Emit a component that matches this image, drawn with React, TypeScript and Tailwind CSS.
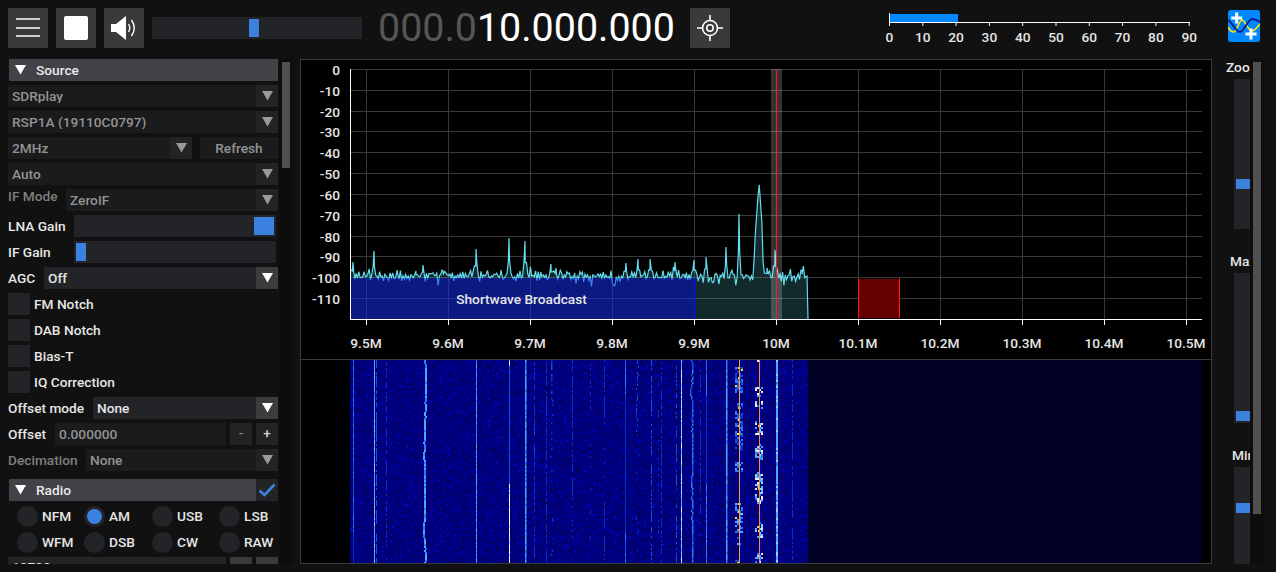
import React, { useMemo } from "react";

function mulberry(seed: number) {
  return () => {
    seed |= 0; seed = (seed + 0x6d2b79f5) | 0;
    let t = Math.imul(seed ^ (seed >>> 15), 1 | seed);
    t = (t + Math.imul(t ^ (t >>> 7), 61 | t)) ^ t;
    return ((t ^ (t >>> 14)) >>> 0) / 4294967296;
  };
}

const Tri = ({ color = "#fff" }: { color?: string }) => (
  <svg width="11" height="10" viewBox="0 0 11 10" className="shrink-0"><polygon points="0,0 11,0 5.5,9.5" fill={color} /></svg>
);

const Combo = ({ text, disabled, className = "" }: { text: string; disabled?: boolean; className?: string }) => (
  <div className={`flex h-[22px] items-center ${disabled ? "bg-[#1a1b1d] text-[#939393]" : "bg-[#222427] text-[#e6e6e6]"} ${className}`}>
    <span className="flex-1 truncate pl-1 pt-px">{text}</span>
    <span className={`flex h-[22px] w-[22px] shrink-0 items-center justify-center ${disabled ? "bg-[#222325]" : "bg-[#3c3c3c]"}`}>
      <Tri color={disabled ? "#9a9a9a" : "#ffffff"} />
    </span>
  </div>
);

const Header = ({ text, check }: { text: string; check?: boolean }) => (
  <div className="ml-px flex h-[22px] items-center">
    <div className="flex h-[22px] flex-1 items-center bg-[#424248] pl-[6px] text-[#e8e8e8]">
      <Tri />
      <span className="ml-[10px] pt-px">{text}</span>
    </div>
    {check && (
      <span className="flex h-[22px] w-[22px] items-center justify-center bg-[#222427]">
        <svg width="18" height="14" viewBox="0 0 18 14"><path d="M1.5 7.5 L6.5 12 L16.5 1.5" fill="none" stroke="#3b82e0" strokeWidth="2.6" /></svg>
      </span>
    )}
  </div>
);

const Check = ({ text }: { text: string }) => (
  <div className="flex h-[22px] items-center gap-1 text-[#e6e6e6]">
    <span className="h-[22px] w-[22px] bg-[#222427]" />
    <span className="pt-px">{text}</span>
  </div>
);

const Slider = ({ thumbClass, className = "" }: { thumbClass: string; className?: string }) => (
  <div className={`flex h-[22px] items-center bg-[#222427] px-[2px] ${className}`}>
    <span className={`h-[18px] bg-[#3b82e0] ${thumbClass}`} />
  </div>
);

const Radio = ({ text, on, w }: { text: string; on?: boolean; w: string }) => (
  <div className={`flex h-[22px] items-center gap-[4px] text-[#e6e6e6] ${w}`}>
    <span className="flex h-[21px] w-[21px] items-center justify-center rounded-full bg-[#222427]">
      {on && <span className="h-[15px] w-[15px] rounded-full bg-[#3b82e0]" />}
    </span>
    <span className="pt-px">{text}</span>
  </div>
);

const Btn = ({ children }: { children: React.ReactNode }) => (
  <div className="flex h-10 w-10 shrink-0 items-center justify-center bg-[#3a3a3a]">{children}</div>
);

function Meter() {
  const ticks = Array.from({ length: 10 }, (_, i) => i);
  return (
    <svg width="320" height="50" viewBox="880 0 320 50" className="block">
      <rect x="890" y="14" width="68" height="8" fill="#0088ff" />
      <line x1="889.5" y1="13" x2="889.5" y2="26" stroke="#fff" />
      <line x1="889" y1="22.5" x2="1190" y2="22.5" stroke="#fff" />
      {ticks.map((i) => {
        const x = 889.5 + i * 33.3;
        return (
          <g key={i}>
            <line x1={x} y1="22" x2={x} y2="26" stroke="#fff" />
            <text x={x} y="42" textAnchor="middle" fontSize="13.7" fontWeight="500" fill="#e6e6e6">{i * 10}</text>
          </g>
        );
      })}
    </svg>
  );
}

function Logo() {
  return (
    <svg width="32" height="32" viewBox="0 0 32 32" className="block">
      <rect width="32" height="32" rx="2.5" fill="#0088ff" />
      <path d="M0 17 C2 21 4 22 6 22 C9 22 11 10 14 10 C17 10 20 21 24 21 C27 21 30 16 32 14" fill="none" stroke="#ffe600" strokeWidth="1.7" />
      <path d="M0 10 C4 12 8 22 12 22 C16 22 20 9 24 9 C27 9 30 11 32 12" fill="none" stroke="#0a1f8f" strokeWidth="1.9" />
      <path d="M8.7 2.5 V13.5 M3.2 8 H14.2" stroke="#fff" strokeWidth="3" />
      <path d="M23 18.5 V29.5 M17.5 24 H28.5" stroke="#fff" strokeWidth="3" />
    </svg>
  );
}

const grid = "#383838";
const xTicks = ["9.5M", "9.6M", "9.7M", "9.8M", "9.9M", "10M", "10.1M", "10.2M", "10.3M", "10.4M", "10.5M"];

const peaks: [number, number][] = [
  [353, 262], [374, 251], [423, 265], [476, 249], [509, 238], [525, 241], [551, 264], [556, 268], [501, 270], [397, 270], [416, 271], [443, 271],
  [626, 263], [638, 259], [650, 259], [675, 262], [694, 260], [706, 257], [726, 247], [739, 214], [775, 250], [767, 268], [802, 270],
];

function Spectrum() {
  const { line, fill } = useMemo(() => {
    const r = mulberry(7);
    const pts: [number, number][] = [];
    let flip = 1;
    for (let x = 351; x < 807; x += 1.3) {
      flip = -flip;
      const g = (r() + r() - 1) * 5 + flip * 1.6;
      let y = 276 + g;
      if (r() < 0.06) y += 4 + r() * 6;
      if (r() < 0.12) y -= 2 + r() * 4;
      for (const [px, py] of peaks) {
        const d = Math.abs(x - px);
        if (d < 1.6) y = Math.min(y, py + (277 - py) * 0.6);
      }
      if (x > 753.5 && x < 764) {
        const e = 245 - Math.max(0, 4.5 - Math.abs(x - 759)) * 14;
        y = Math.min(y, x < 755 || x > 763 ? 262 : e);
      }
      pts.push([x, y]);
    }
    for (const [px, py] of peaks) pts.push([px, py]);
    pts.sort((a, b) => a[0] - b[0]);
    pts.push([807, 276], [808, 319]);
    const l = pts.map((p) => `${p[0].toFixed(1)},${p[1].toFixed(1)}`).join(" ");
    return { line: l, fill: `351,319 ${l}` };
  }, []);
  return (
    <svg width="910" height="299" viewBox="301 60 910 299" className="block shrink-0">
      {xTicks.map((_, i) => {
        const x = 366.5 + i * 82;
        return <line key={i} x1={x} y1="69" x2={x} y2="319" stroke={grid} />;
      })}
      {Array.from({ length: 12 }, (_, i) => {
        const y = Math.round(69 + i * 20.83) + 0.5;
        return (
          <g key={i}>
            <line x1="350" y1={y} x2="1202" y2={y} stroke={grid} />
            <text x="340" y={y + 5} textAnchor="end" fontSize="13.7" fontWeight="500" fill="#e6e6e6">{i === 0 ? "0" : `-${i * 10}`}</text>
          </g>
        );
      })}
      <polygon points={fill} fill="#5fd0e0" fillOpacity="0.2" />
      <polyline points={line} fill="none" stroke="#62dcee" strokeWidth="1.2" />
      <rect x="351" y="278" width="344" height="41" fill="#0000ff" fillOpacity="0.4" />
      <line x1="695" y1="278" x2="695" y2="319" stroke="#0000ff" />
      <rect x="771" y="69" width="11" height="250" fill="#ffffff" fillOpacity="0.2" />
      <line x1="776.5" y1="69" x2="776.5" y2="319" stroke="#ff1a1a" />
      <rect x="858" y="279" width="41" height="39" fill="#640000" />
      <line x1="858.5" y1="278" x2="858.5" y2="318" stroke="#ff1a1a" />
      <line x1="899.5" y1="278" x2="899.5" y2="318" stroke="#ff1a1a" />
      <line x1="350.5" y1="69" x2="350.5" y2="320" stroke="#fff" />
      <line x1="350" y1="319.5" x2="1202" y2="319.5" stroke="#fff" />
      {xTicks.map((t, i) => {
        const x = 366.5 + i * 82;
        return (
          <g key={t}>
            <line x1={x} y1="319" x2={x} y2="325" stroke="#fff" />
            <text x={x - 0.5} y="348" textAnchor="middle" fontSize="13.7" fontWeight="500" fill="#e6e6e6">{t}</text>
          </g>
        );
      })}
      <text x="521.5" y="304" textAnchor="middle" fontSize="13.7" fontWeight="500" fill="#e6e6e6">Shortwave Broadcast</text>
    </svg>
  );
}

type Sig = { x: number; w: number; v: number; on: number; wander?: number };
const sigs: Sig[] = [
  { x: 353, w: 1, v: 0.45, on: 0.4 }, { x: 374, w: 1, v: 0.72, on: 0.95 }, { x: 376, w: 1, v: 0.42, on: 0.5 }, { x: 386, w: 1, v: 0.28, on: 0.2 },
  { x: 424, w: 2, v: 0.66, on: 0.95, wander: 1.2 }, { x: 476, w: 1, v: 0.62, on: 0.95 }, { x: 509, w: 1, v: 0.98, on: 0.85 },
  { x: 525, w: 1.5, v: 0.66, on: 0.98 }, { x: 534, w: 1, v: 0.32, on: 0.35 }, { x: 551, w: 1.5, v: 0.34, on: 0.6, wander: 1 }, { x: 546, w: 1, v: 0.25, on: 0.3 },
  { x: 572, w: 1, v: 0.26, on: 0.4 }, { x: 590, w: 1, v: 0.25, on: 0.3 }, { x: 604, w: 1, v: 0.28, on: 0.35 },
  { x: 625, w: 1, v: 0.5, on: 0.9 }, { x: 637, w: 1, v: 0.4, on: 0.55, wander: 0.6 }, { x: 651, w: 1, v: 0.4, on: 0.7 }, { x: 658, w: 1, v: 0.32, on: 0.5 }, { x: 661, w: 1, v: 0.28, on: 0.4 },
  { x: 676, w: 1, v: 0.38, on: 0.55 }, { x: 681, w: 1, v: 0.84, on: 0.95 }, { x: 691, w: 1.5, v: 0.5, on: 0.8, wander: 1.4 }, { x: 700, w: 1, v: 0.28, on: 0.4 },
  { x: 706, w: 1, v: 0.55, on: 0.75 }, { x: 726, w: 1.5, v: 0.66, on: 0.98 }, { x: 776, w: 2, v: 0.72, on: 0.98 }, { x: 792, w: 1, v: 0.28, on: 0.15 },
];
const blotches: [number, number, number, number, number][] = [
  [755, 763, 387, 397, 0.95], [755, 763, 401, 410, 0.95], [755, 763, 421, 435, 0.95], [755, 763, 444, 462, 0.85], [755, 763, 472, 505, 0.9], [755, 763, 522, 538, 0.9], [755, 763, 553, 563, 0.9], [755, 763, 360, 362, 0.9],
  [735, 743, 367, 392, 0.5], [735, 743, 403, 450, 0.55], [735, 743, 462, 472, 0.7], [735, 743, 503, 532, 0.7], [737, 741, 537, 547, 0.7], [735, 743, 560, 563, 0.6],
];

function sigColor(v: number) {
  if (v >= 0.95) return "#ffffff";
  if (v > 0.85) return "#dff1ff";
  if (v > 0.72) return "#8fd0ff";
  if (v > 0.58) return "#4aa8ff";
  if (v > 0.46) return "#2a7cf0";
  if (v > 0.34) return "#1650dc";
  return "#0a2ec0";
}

function Waterfall() {
  const layers = useMemo(() => {
    const r = mulberry(42);
    const m = new Map<string, string[]>();
    const add = (c: string, x: number, y: number, w: number, h: number) => {
      if (!m.has(c)) m.set(c, []);
      m.get(c)!.push(`M${x} ${y}h${w}v${h}h${-w}z`);
    };
    const noise = ["#000060", "#00006e", "#00007c", "#00008a", "#00009a", "#0008ac"];
    for (let y = 360; y < 563; y += 2) {
      for (let x = 350; x < 808; x += 2) {
        const n = r() + r();
        let idx = Math.floor(n * 2.6);
        if (r() < 0.012) idx = 5;
        add(noise[Math.min(idx, 5)], x, y, 2, 2);
      }
    }
    for (const s of sigs) {
      let on = true; let off = 0; let drift = 0;
      for (let y = 360; y < 563; y += 2) {
        if (r() < 0.02) on = r() < s.on;
        if (s.wander) { drift += (r() - 0.5) * 0.9; drift = Math.max(-s.wander, Math.min(s.wander, drift)); }
        off = Math.round(drift);
        if (s.v < 0.45 && r() < (on ? 0.35 : 0.85)) continue;
        const level = on ? s.v * (0.78 + r() * 0.3) : s.v * 0.42;
        add(sigColor(level), s.x + off, y, s.w, 2);
      }
    }
    for (const [x0, x1, y0, y1, v] of blotches) {
      for (let y = y0; y < y1; y += 2) {
        for (let x = x0; x < x1; x += 2) {
          const p = r();
          if (p < 0.42) continue;
          add(sigColor(v * (0.55 + r() * 0.5)), x, y, 2, 2);
          if (p > 0.985) add("#ffe600", x, y, 2, 2);
        }
        if (r() < 0.1) add("#ffe600", Math.round((x0 + x1) / 2) - 1, y, 2, 2);
      }
    }
    return Array.from(m.entries()).map(([c, d]) => ({ c, d: d.join("") }));
  }, []);
  return (
    <svg width="910" height="203" viewBox="301 360 910 203" className="block">
      <rect x="808" y="360" width="394" height="203" fill="#000024" />
      {layers.map((l) => <path key={l.c} d={l.d} fill={l.c} />)}
      <rect x="739" y="360" width="1" height="203" fill="#ff9a55" />
      <rect x="759" y="360" width="1" height="203" fill="#ff8a55" />
    </svg>
  );
}

const VSlider = ({ label, h, top, lpad }: { label: string; h: string; top: string; lpad: string }) => (
  <div className="flex flex-col">
    <div className={`h-[20px] w-[38px] overflow-hidden whitespace-nowrap leading-[16px] text-[#e6e6e6] ${lpad}`}>{label}</div>
    <div className={`ml-[22px] flex w-4 flex-col items-end bg-[#222427] ${h} ${top}`}>
      <span className="h-[10px] w-[14px] shrink-0 bg-[#3b82e0]" />
    </div>
  </div>
);

export default function App() {
  return (
    <div className="flex h-[572px] w-[1276px] flex-col overflow-hidden bg-[#111111] font-['Roboto',sans-serif] text-[13.7px] font-medium leading-none">
      <div className="flex h-[59px] shrink-0 items-start gap-2 px-2 pt-2">
        <Btn>
          <svg width="24" height="20" viewBox="0 0 24 20"><path d="M0 1h24M0 10h24M0 18h24" stroke="#fff" strokeWidth="1.6" /></svg>
        </Btn>
        <Btn><span className="h-6 w-6 rounded-[2px] bg-white" /></Btn>
        <Btn>
          <svg width="26" height="24" viewBox="0 0 26 24">
            <polygon points="0,8 5,8 15,0 15,24 5,16 0,16" fill="#fff" />
            <path d="M17.5 8 Q20 12 17.5 16" fill="none" stroke="#fff" strokeWidth="1.4" />
            <path d="M20.5 4 Q26 12 20.5 20" fill="none" stroke="#fff" strokeWidth="1.4" />
          </svg>
        </Btn>
        <div className="mt-[9px] flex h-[22px] w-[210px] items-center bg-[#222427] pl-[97px]">
          <span className="h-[18px] w-[10px] bg-[#3b82e0]" />
        </div>
        <div className="ml-2 flex h-10 w-[304px] items-center whitespace-nowrap text-[39.4px] font-normal">
          <span className="text-[#565656]">000.0</span>
          <span className="text-white">10.000.000</span>
        </div>
        <Btn>
          <svg width="26" height="26" viewBox="0 0 26 26" fill="none" stroke="#fff">
            <circle cx="13" cy="13" r="7.5" strokeWidth="1.6" />
            <circle cx="13" cy="13" r="3.2" strokeWidth="1.6" />
            <path d="M13 0v5M13 21v5M0 13h5M21 13h5" strokeWidth="1.6" />
          </svg>
        </Btn>
        <div className="-mt-2 ml-[142px]"><Meter /></div>
        <div className="ml-5 mt-[2px]"><Logo /></div>
      </div>

      <div className="flex h-[505px] shrink-0">
        <div className="flex h-[505px] w-[278px] shrink-0 flex-col gap-1 overflow-hidden pl-2">
          <Header text="Source" />
          <Combo text="SDRplay" disabled />
          <Combo text="RSP1A (19110C0797)" disabled />
          <div className="flex gap-2">
            <Combo text="2MHz" disabled className="w-[184px]" />
            <div className="flex h-[22px] flex-1 items-center justify-center bg-[#1a1b1d] pt-px text-[#939393]">Refresh</div>
          </div>
          <Combo text="Auto" disabled />
          <div className="flex items-center">
            <span className="-mt-[6px] w-[58px] text-[#7f7f7f]">IF Mode</span>
            <Combo text="ZeroIF" disabled className="flex-1" />
          </div>
          <div className="flex items-center text-[#e6e6e6]">
            <span className="w-[66px] pt-px">LNA Gain</span>
            <Slider thumbClass="ml-auto w-5" className="mr-[2px] flex-1" />
          </div>
          <div className="flex items-center text-[#e6e6e6]">
            <span className="w-[66px] pt-px">IF Gain</span>
            <Slider thumbClass="w-[10px]" className="mr-[2px] flex-1" />
          </div>
          <div className="flex items-center text-[#e6e6e6]">
            <span className="w-[36px] pt-px">AGC</span>
            <Combo text="Off" className="flex-1" />
          </div>
          <Check text="FM Notch" />
          <Check text="DAB Notch" />
          <Check text="Bias-T" />
          <Check text="IQ Correction" />
          <div className="flex items-center text-[#e6e6e6]">
            <span className="w-[85px] pt-px">Offset mode</span>
            <Combo text="None" className="flex-1" />
          </div>
          <div className="flex items-center gap-1 text-[#e6e6e6]">
            <span className="w-[43px] pt-px">Offset</span>
            <div className="flex h-[22px] flex-1 items-center bg-[#1a1b1d] pl-1 pt-px text-[#939393]">0.000000</div>
            <div className="flex h-[22px] w-[22px] items-center justify-center bg-[#222325] text-[#939393]">-</div>
            <div className="flex h-[22px] w-[22px] items-center justify-center bg-[#222325] text-[#d0d0d0]">+</div>
          </div>
          <div className="flex items-center">
            <span className="w-[78px] pt-px text-[#7f7f7f]">Decimation</span>
            <Combo text="None" disabled className="flex-1" />
          </div>
          <div className="mt-1"><Header text="Radio" check /></div>
          <div className="flex pl-[9px]">
            <Radio text="NFM" w="w-[67px]" />
            <Radio text="AM" on w="w-[68px]" />
            <Radio text="USB" w="w-[67px]" />
            <Radio text="LSB" w="w-[59px]" />
          </div>
          <div className="flex pl-[9px]">
            <Radio text="WFM" w="w-[67px]" />
            <Radio text="DSB" w="w-[68px]" />
            <Radio text="CW" w="w-[67px]" />
            <Radio text="RAW" w="w-[59px]" />
          </div>
          <div className="flex gap-1 text-[#e6e6e6]">
            <div className="flex h-[22px] flex-1 items-center bg-[#222427] pl-1">10700</div>
            <div className="h-[22px] w-[22px] bg-[#3a3a3a]" />
            <div className="h-[22px] w-[22px] bg-[#3a3a3a]" />
          </div>
        </div>

        <div className="ml-px flex h-[505px] w-[13px] shrink-0 justify-center bg-[#0d0d0d] pt-[3px]">
          <div className="h-[106px] w-2 bg-[#505050]" />
        </div>

        <div className="ml-[8px] flex h-[505px] w-[912px] shrink-0 flex-col border border-[#3a3a3a] bg-black">
          <div className="border-b border-[#3a3a3a]"><Spectrum /></div>
          <Waterfall />
        </div>

        <div className="flex h-[505px] w-[38px] shrink-0 flex-col gap-[24px] overflow-hidden">
          <VSlider label="Zoom" lpad="pl-[14px]" h="h-[150px]" top="pt-[100px]" />
          <VSlider label="Max" lpad="pl-[18px]" h="h-[150px]" top="pt-[138px]" />
          <VSlider label="Min" lpad="pl-[20px]" h="h-[150px]" top="pt-[36px]" />
        </div>
        <div className="flex h-[505px] w-[14px] shrink-0 justify-center bg-[#0d0d0d] pt-[3px]">
          <div className="h-[452px] w-2 bg-[#505050]" />
        </div>
      </div>
    </div>
  );
}
